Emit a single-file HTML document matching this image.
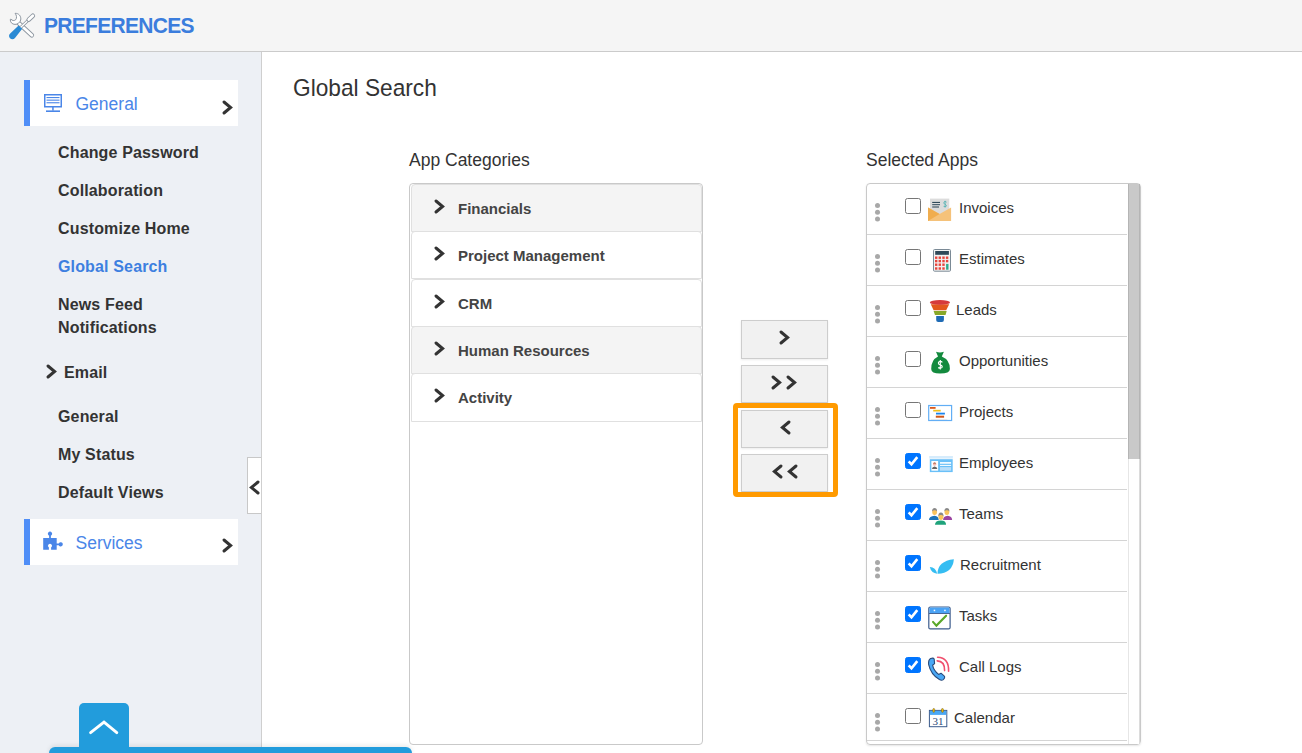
<!DOCTYPE html>
<html><head><meta charset="utf-8">
<style>
*{margin:0;padding:0;box-sizing:border-box}
html,body{width:1302px;height:753px;overflow:hidden;background:#fff;font-family:"Liberation Sans",sans-serif;color:#333}
.a{position:absolute}
svg{position:absolute;overflow:visible}
#hdr{left:0;top:0;width:1302px;height:52px;background:#f5f5f5;border-bottom:1px solid #cbcbcb}
#hdr .t{left:44px;top:13px;font-size:21px;font-weight:bold;color:#3b7ddd;line-height:24px;letter-spacing:-0.7px;transform:scaleY(1.085);transform-origin:0 4.7px}
#side{left:0;top:52px;width:262px;height:701px;background:#edf0f5;border-right:1px solid #cfcfcf}
.card{left:24px;width:214px;height:46px;background:#fff;border-left:6px solid #4f8ef7}
.card .lbl{left:45.5px;top:13px;font-size:17.5px;color:#4a86e8;line-height:22px}
.si{left:58px;font-size:16px;font-weight:bold;color:#333;line-height:20px;white-space:nowrap;letter-spacing:0.15px}
#main-h{left:293px;top:74px;font-size:22.7px;line-height:26px;color:#333;transform:scaleY(1.05);transform-origin:0 5px}
.lab{font-size:17.5px;line-height:22px;color:#333}
#cat{left:409px;top:183px;width:294px;height:562px;border:1px solid #c9c9c9;border-radius:4px;overflow:hidden}
.it{position:absolute;left:1px;width:291px;height:48px;border:1px solid #e0e0e0;border-radius:4px 4px 0 0;background:#fff}
.it.g{background:#f4f4f4}
.it .tx{position:absolute;left:46px;top:15px;font-size:15px;font-weight:bold;color:#444;line-height:18px;white-space:nowrap}
.it svg{left:22px;top:14px}
.btn{left:741px;width:87px;height:39px;background:#f1f1f1;border:1px solid #cdcdcd;box-shadow:0 1px 2px rgba(0,0,0,.08)}
#orange{left:732.5px;top:403px;width:105px;height:94px;border:5px solid #ff9a00;border-radius:4px}
#sel{left:866px;top:183px;width:275px;height:562px;border:1px solid #c9c9c9;border-radius:4px;overflow:hidden;box-shadow:0 1px 2px rgba(0,0,0,.1)}
.row{position:absolute;left:0;width:260px;height:51px;border-bottom:1px solid #d4d4d4}
.row .tx{position:absolute;font-size:15px;line-height:18px;color:#333;white-space:nowrap;top:15px;left:92px}
.dots{position:absolute;left:9px;top:19px;width:5px}
.dots i{display:block;width:5px;height:5px;border-radius:50%;background:#a9a9a9;margin-bottom:1.75px}
.cb{position:absolute;left:38px;top:14px;width:16px;height:16px;border:1px solid #767676;border-radius:2.5px;background:#fff}
.cb.on{background:#0075ff;border-color:#0075ff}
.row svg.ic{left:0;top:0}
#sb{left:1128px;top:184px;width:12px;height:560px;background:#fff;border-left:1px solid #e6e6e6;border-right:1px solid #dcdcdc}
#thumb{left:1128px;top:184px;width:12px;height:275px;background:#c9c9c9;border-left:1px solid #b5b5b5;border-right:1px solid #b5b5b5}
#tab{left:247px;top:457px;width:14px;height:57px;background:#fff;border:1px solid #c8c8c8;border-right:none}
#upbtn{left:79px;top:703px;width:50px;height:50px;background:#229cdc;border-radius:5px 5px 0 0}
#bar{left:49px;top:747px;width:363px;height:10px;background:#229cdc;border-radius:6px 6px 0 0;box-shadow:0 -2px 4px rgba(0,0,0,.08)}
</style></head><body>
<div id="hdr" class="a">
  <svg style="left:6px;top:10px" width="32" height="32" viewBox="0 0 32 32">
    <!-- wrench -->
    <g stroke-linecap="round">
      <line x1="12" y1="12.5" x2="25.8" y2="25.2" stroke="#8d96a0" stroke-width="4.6"/>
      <line x1="12" y1="12.5" x2="25.8" y2="25.2" stroke="#fff" stroke-width="2.8"/>
    </g>
    <path d="M4.3 9.3 C4 12 6 14.4 9 14.4 C11.5 14.4 14 12.6 14.7 10 C15.3 7 13.6 4 10.4 3.4 L9.1 3.3 C10.7 5.2 11 8.2 9.7 9.7 C8.2 11 6.2 10.7 5 9.2 Z" fill="#fff" stroke="#8d96a0" stroke-width="1" stroke-linejoin="round"/>
    <!-- screwdriver -->
    <g stroke-linecap="round">
      <line x1="14" y1="18" x2="24" y2="8.6" stroke="#8d96a0" stroke-width="3"/>
      <line x1="14" y1="18" x2="24" y2="8.6" stroke="#fff" stroke-width="1.4"/>
      <line x1="22.8" y1="9.6" x2="26.8" y2="5.8" stroke="#8d96a0" stroke-width="4.6"/>
      <line x1="22.8" y1="9.6" x2="26.8" y2="5.8" stroke="#fff" stroke-width="2.8"/>
    </g>
    <path d="M12.6 15.6 L16.2 18.8 L9 28 C7.6 29.6 5.4 29.6 4 28.2 C2.6 26.8 2.8 24.8 4.2 23.6 Z" fill="#2a8ad4"/>
  </svg>
  <div class="a t">PREFERENCES</div>
</div>
<div id="side" class="a"></div>
<div class="a card" style="top:80px">
  <svg style="left:14px;top:14px" width="18" height="18" viewBox="0 0 18 18">
    <rect x="0.75" y="0.75" width="16.5" height="12" fill="none" stroke="#4a86e8" stroke-width="1.5"/>
    <rect x="2.5" y="3" width="13" height="1.1" fill="#4a86e8"/>
    <rect x="2.5" y="5.6" width="13" height="1.1" fill="#4a86e8"/>
    <rect x="2.5" y="8.2" width="13" height="1.1" fill="#4a86e8"/>
    <rect x="8.2" y="12.6" width="1.5" height="4" fill="#4a86e8"/>
    <rect x="2" y="16.4" width="14" height="1.6" fill="#4a86e8"/>
  </svg>
  <div class="a lbl">General</div>
  <svg style="left:192px;top:20px" width="11" height="15"><path d="M2 2 L8.6 7.5 L2 13" fill="none" stroke="#333" stroke-width="3" stroke-linecap="round" stroke-linejoin="miter"/></svg>
</div>
<div class="a si" style="top:143px">Change Password</div>
<div class="a si" style="top:181px">Collaboration</div>
<div class="a si" style="top:219px">Customize Home</div>
<div class="a si" style="top:257px;color:#3d7fe0">Global Search</div>
<div class="a si" style="top:293px;line-height:23px">News Feed<br>Notifications</div>
<svg style="left:46px;top:364px" width="11" height="15"><path d="M2 2 L8.6 7.5 L2 13" fill="none" stroke="#333" stroke-width="3" stroke-linecap="round" stroke-linejoin="miter"/></svg>
<div class="a si" style="top:363px;left:64px">Email</div>
<div class="a si" style="top:407px">General</div>
<div class="a si" style="top:445px">My Status</div>
<div class="a si" style="top:483px">Default Views</div>
<div class="a card" style="top:519px">
  <svg style="left:8px;top:7px" width="24" height="24" viewBox="0 0 24 24">
    <path d="M5.2 12 H11.1 V9.7 A2.15 2.15 0 1 1 12.9 9.7 V12 H18.7 V17.4 H20.7 A2.15 2.15 0 1 1 20.7 19.2 H18.7 V23.7 H13.1 V21.5 A2 2 0 1 0 10.9 21.5 V23.7 H5.2 Z" fill="#4a86e8"/>
  </svg>
  <div class="a lbl">Services</div>
  <svg style="left:192px;top:39px;top:19px" width="11" height="15"><path d="M2 2 L8.6 7.5 L2 13" fill="none" stroke="#333" stroke-width="3" stroke-linecap="round" stroke-linejoin="miter"/></svg>
</div>
<div id="tab" class="a"><svg style="left:1px;top:22px" width="11" height="15"><path d="M9 2 L2.4 7.5 L9 13" fill="none" stroke="#333" stroke-width="3" stroke-linecap="round" stroke-linejoin="miter"/></svg></div>

<div id="main-h" class="a">Global Search</div>
<div class="a lab" style="left:409px;top:149px">App Categories</div>
<div class="a lab" style="left:866px;top:149px">Selected Apps</div>

<div id="cat" class="a">
  <div class="it g" style="top:0px"><svg width="11" height="15"><path d="M2 2 L8.6 7.5 L2 13" fill="none" stroke="#333" stroke-width="3" stroke-linecap="round" stroke-linejoin="miter"/></svg><div class="tx">Financials</div></div>
  <div class="it" style="top:47px"><svg width="11" height="15"><path d="M2 2 L8.6 7.5 L2 13" fill="none" stroke="#333" stroke-width="3" stroke-linecap="round" stroke-linejoin="miter"/></svg><div class="tx">Project Management</div></div>
  <div class="it" style="top:95px"><svg width="11" height="15"><path d="M2 2 L8.6 7.5 L2 13" fill="none" stroke="#333" stroke-width="3" stroke-linecap="round" stroke-linejoin="miter"/></svg><div class="tx">CRM</div></div>
  <div class="it g" style="top:142px"><svg width="11" height="15"><path d="M2 2 L8.6 7.5 L2 13" fill="none" stroke="#333" stroke-width="3" stroke-linecap="round" stroke-linejoin="miter"/></svg><div class="tx">Human Resources</div></div>
  <div class="it" style="top:189px;height:49px"><svg width="11" height="15"><path d="M2 2 L8.6 7.5 L2 13" fill="none" stroke="#333" stroke-width="3" stroke-linecap="round" stroke-linejoin="miter"/></svg><div class="tx">Activity</div></div>
</div>

<div class="a btn" style="top:320px"><svg style="left:37px;top:9px" width="11" height="15"><path d="M2 2 L8.6 7.5 L2 13" fill="none" stroke="#333" stroke-width="3" stroke-linecap="round" stroke-linejoin="miter"/></svg></div>
<div class="a btn" style="top:365px;height:38px"><svg style="left:29px;top:9px" width="11" height="15"><path d="M2 2 L8.6 7.5 L2 13" fill="none" stroke="#333" stroke-width="3" stroke-linecap="round" stroke-linejoin="miter"/></svg><svg style="left:44px;top:9px" width="11" height="15"><path d="M2 2 L8.6 7.5 L2 13" fill="none" stroke="#333" stroke-width="3" stroke-linecap="round" stroke-linejoin="miter"/></svg></div>
<div class="a btn" style="top:410px;height:38px"><svg style="left:38px;top:8.5px" width="11" height="15"><path d="M9 2 L2.4 7.5 L9 13" fill="none" stroke="#333" stroke-width="3" stroke-linecap="round" stroke-linejoin="miter"/></svg></div>
<div class="a btn" style="top:454px;height:38px"><svg style="left:30px;top:9px" width="11" height="15"><path d="M9 2 L2.4 7.5 L9 13" fill="none" stroke="#333" stroke-width="3" stroke-linecap="round" stroke-linejoin="miter"/></svg><svg style="left:45px;top:9px" width="11" height="15"><path d="M9 2 L2.4 7.5 L9 13" fill="none" stroke="#333" stroke-width="3" stroke-linecap="round" stroke-linejoin="miter"/></svg></div>
<div id="orange" class="a"></div>

<div id="sel" class="a">
 <div class="row" style="top:0">
  <svg style="left:8px;top:19px" width="5" height="19"><circle cx="2.5" cy="2.5" r="2.5" fill="#a8a8a8"/><circle cx="2.5" cy="9.3" r="2.5" fill="#a8a8a8"/><circle cx="2.5" cy="16" r="2.5" fill="#a8a8a8"/></svg><div class="cb"></div>
  <svg class="ic" width="30" height="30" viewBox="0 0 30 30" style="left:58px;top:11px">
    <rect x="5" y="3.6" width="19.3" height="16" fill="#dcdcdc"/>
    <rect x="7.2" y="6.9" width="7.8" height="1.1" fill="#2f4a5a"/>
    <rect x="7.2" y="9.1" width="7.8" height="1.1" fill="#3d5666"/>
    <rect x="7.2" y="11.2" width="6.8" height="1.6" fill="#6a7a86"/>
    <path d="M21.6 7.2 Q20.6 6.2 19.6 6.6 Q18.4 7.1 19 8.4 Q19.6 9.2 20.6 9.6 Q21.8 10.3 21.2 11.3 Q20.4 12.2 18.6 11.4 M20.1 5.8 V12.4" fill="none" stroke="#49aeb0" stroke-width="0.8"/>
    <path d="M3 12.4 L14.6 19 L26.1 12.4 V25.9 H3 Z" fill="#f5c27a"/>
    <path d="M3 12.4 L14.6 19 L3 25.9 Z" fill="#f0ad4e"/>
  </svg>
  <div class="tx">Invoices</div>
 </div>
 <div class="row" style="top:51px">
  <svg style="left:8px;top:19px" width="5" height="19"><circle cx="2.5" cy="2.5" r="2.5" fill="#a8a8a8"/><circle cx="2.5" cy="9.3" r="2.5" fill="#a8a8a8"/><circle cx="2.5" cy="16" r="2.5" fill="#a8a8a8"/></svg><div class="cb"></div>
  <svg class="ic" width="30" height="30" viewBox="0 0 30 30" style="left:61px;top:10px">
    <rect x="5.5" y="4.5" width="17" height="21.7" rx="1" fill="#f2f2f2" stroke="#7b8a96" stroke-width="1"/>
    <rect x="7.2" y="6" width="13.7" height="3.8" fill="#2f4858"/>
    <g fill="#e8453c">
      <rect x="7" y="11.5" width="2.4" height="2.4"/><rect x="10.6" y="11.5" width="2.4" height="2.4"/><rect x="14.3" y="11.5" width="2.4" height="2.4"/><rect x="17.9" y="11.5" width="2.4" height="2.4"/>
      <rect x="7" y="14.9" width="2.4" height="2.4"/><rect x="10.6" y="14.9" width="2.4" height="2.4"/><rect x="14.3" y="14.9" width="2.4" height="2.4"/><rect x="17.9" y="14.9" width="2.4" height="2.4"/>
      <rect x="7" y="18.5" width="2.4" height="2.4"/><rect x="10.6" y="18.5" width="2.4" height="2.4"/><rect x="14.3" y="18.5" width="2.4" height="2.4"/>
      <rect x="7" y="22.3" width="2.4" height="2.4"/><rect x="10.6" y="22.3" width="2.4" height="2.4"/><rect x="14.3" y="22.3" width="2.4" height="2.4"/>
    </g>
    <rect x="18.1" y="18.9" width="2.4" height="5.8" fill="#2eaa8a"/>
  </svg>
  <div class="tx">Estimates</div>
 </div>
 <div class="row" style="top:102px">
  <svg style="left:8px;top:19px" width="5" height="19"><circle cx="2.5" cy="2.5" r="2.5" fill="#a8a8a8"/><circle cx="2.5" cy="9.3" r="2.5" fill="#a8a8a8"/><circle cx="2.5" cy="16" r="2.5" fill="#a8a8a8"/></svg><div class="cb"></div>
  <svg class="ic" width="30" height="30" viewBox="0 0 30 30" style="left:59px;top:10px">
    <path d="M4.8 8.2 L7.6 14.3 H20.2 L23.2 8.2 Z" fill="#e2571b"/>
    <ellipse cx="13.9" cy="6.4" rx="10.1" ry="2.4" fill="#d63a3a"/>
    <path d="M7.6 14.9 L9 18.9 H19.5 L20.7 14.9 Z" fill="#88a829"/>
    <path d="M10.2 19.9 H17.9 V24 Q17.9 25.9 16 25.9 H12.1 Q10.2 25.9 10.2 24 Z" fill="#1f6bb5"/>
  </svg>
  <div class="tx" style="left:89px">Leads</div>
 </div>
 <div class="row" style="top:153px">
  <svg style="left:8px;top:19px" width="5" height="19"><circle cx="2.5" cy="2.5" r="2.5" fill="#a8a8a8"/><circle cx="2.5" cy="9.3" r="2.5" fill="#a8a8a8"/><circle cx="2.5" cy="16" r="2.5" fill="#a8a8a8"/></svg><div class="cb"></div>
  <svg class="ic" width="30" height="30" viewBox="0 0 30 30" style="left:59px;top:10px">
    <path d="M10 4.8 Q14 6.2 17.9 4.8 L15.8 9.6 Q23.9 13 23.9 22 Q23.9 26.5 14 26.5 Q5.2 26.5 5.2 22 Q5.2 13 12 9.6 Z" fill="#138a3e"/>
    <path d="M16.4 15.3 Q15.2 14.1 13.6 14.5 Q11.9 15.1 12.6 16.8 Q13.2 17.6 14.6 18 Q16.6 18.7 16.1 20.3 Q15.2 21.7 12.2 20.6 M14.3 12.9 V22.6" fill="none" stroke="#fff" stroke-width="1.15"/>
  </svg>
  <div class="tx">Opportunities</div>
 </div>
 <div class="row" style="top:204px">
  <svg style="left:8px;top:19px" width="5" height="19"><circle cx="2.5" cy="2.5" r="2.5" fill="#a8a8a8"/><circle cx="2.5" cy="9.3" r="2.5" fill="#a8a8a8"/><circle cx="2.5" cy="16" r="2.5" fill="#a8a8a8"/></svg><div class="cb"></div>
  <svg class="ic" width="30" height="30" viewBox="0 0 30 30" style="left:58px;top:10px">
    <rect x="3.7" y="7.5" width="22.9" height="15" fill="#fff" stroke="#62aef5" stroke-width="1.2"/>
    <rect x="5" y="9" width="5.6" height="1.8" fill="#d9581a"/>
    <rect x="8.2" y="11.8" width="7.5" height="1.7" fill="#f2c01e"/>
    <rect x="11" y="14.7" width="8.9" height="1.8" fill="#1a86f0"/>
    <rect x="10.8" y="17.7" width="8.3" height="2" fill="#d0581a"/>
    <rect x="6" y="21.2" width="16.3" height="0.6" fill="#ddd"/>
  </svg>
  <div class="tx">Projects</div>
 </div>
 <div class="row" style="top:255px">
  <svg style="left:8px;top:19px" width="5" height="19"><circle cx="2.5" cy="2.5" r="2.5" fill="#a8a8a8"/><circle cx="2.5" cy="9.3" r="2.5" fill="#a8a8a8"/><circle cx="2.5" cy="16" r="2.5" fill="#a8a8a8"/></svg><div class="cb on"><svg width="16" height="16" style="left:-1px;top:-1px"><path d="M3.7 8.3 L6.5 11.3 L12.3 4.1" fill="none" stroke="#fff" stroke-width="2.6"/></svg></div>
  <svg class="ic" width="30" height="30" viewBox="0 0 30 30" style="left:58px;top:10px">
    <rect x="4.2" y="7" width="23.7" height="2.6" fill="#d6ecfc"/>
    <rect x="4.8" y="10.2" width="22.9" height="12.9" fill="#6ac0f8"/>
    <rect x="6.4" y="12" width="6.7" height="9.7" fill="#fff"/>
    <circle cx="9.6" cy="15.2" r="1.6" fill="#f4b8b0"/>
    <path d="M7.8 14.6 Q9.6 12.6 11.4 14.6 Z" fill="#9a4a2a"/>
    <path d="M6.9 20 Q7.2 17.6 9.6 17.4 Q12 17.6 12.4 20 Z" fill="#666"/>
    <rect x="15" y="13.1" width="11.1" height="1.6" fill="#fff"/>
    <rect x="15" y="15.9" width="11.1" height="1" fill="#fff"/>
    <rect x="15" y="18.1" width="11.1" height="3.6" fill="#b8defa"/>
  </svg>
  <div class="tx">Employees</div>
 </div>
 <div class="row" style="top:306px">
  <svg style="left:8px;top:19px" width="5" height="19"><circle cx="2.5" cy="2.5" r="2.5" fill="#a8a8a8"/><circle cx="2.5" cy="9.3" r="2.5" fill="#a8a8a8"/><circle cx="2.5" cy="16" r="2.5" fill="#a8a8a8"/></svg><div class="cb on"><svg width="16" height="16" style="left:-1px;top:-1px"><path d="M3.7 8.3 L6.5 11.3 L12.3 4.1" fill="none" stroke="#fff" stroke-width="2.6"/></svg></div>
  <svg class="ic" width="30" height="30" viewBox="0 0 30 30" style="left:58px;top:10px">
    <path d="M4 19.9 Q4 16 9.6 15.7 Q13.7 16 13.7 19.9 Z" fill="#1a72b8"/>
    <ellipse cx="9.6" cy="12" rx="2.4" ry="3" fill="#f9c35b"/>
    <path d="M7.1 11.6 Q7 8 9.6 8 Q12.2 8 12.1 11.6 Q11 10 9.6 10.2 Q8.2 10 7.1 11.6Z" fill="#888"/>
    <path d="M18.1 19.9 Q18.1 16 22.6 15.7 Q27.1 16 27.1 19.9 Z" fill="#9b44a0"/>
    <ellipse cx="21.9" cy="12" rx="2.4" ry="3" fill="#f9c35b"/>
    <path d="M19.4 11.6 Q19.3 8 21.9 8 Q24.5 8 24.4 11.6 Q23.3 10 21.9 10.2 Q20.5 10 19.4 11.6Z" fill="#888"/>
    <path d="M10 24.7 Q10 20.6 15.9 20.5 Q21.1 20.6 21.1 24.7 Z" fill="#1fa37b"/>
    <ellipse cx="15.9" cy="16.8" rx="2.5" ry="3.1" fill="#f9c35b"/>
    <path d="M13.3 16.4 Q13.2 12.6 15.9 12.6 Q18.6 12.6 18.5 16.4 Q17.3 14.8 15.9 15 Q14.5 14.8 13.3 16.4Z" fill="#888"/>
  </svg>
  <div class="tx">Teams</div>
 </div>
 <div class="row" style="top:357px">
  <svg style="left:8px;top:19px" width="5" height="19"><circle cx="2.5" cy="2.5" r="2.5" fill="#a8a8a8"/><circle cx="2.5" cy="9.3" r="2.5" fill="#a8a8a8"/><circle cx="2.5" cy="16" r="2.5" fill="#a8a8a8"/></svg><div class="cb on"><svg width="16" height="16" style="left:-1px;top:-1px"><path d="M3.7 8.3 L6.5 11.3 L12.3 4.1" fill="none" stroke="#fff" stroke-width="2.6"/></svg></div>
  <svg class="ic" width="30" height="30" viewBox="0 0 30 30" style="left:58px;top:10px">
    <path d="M4.8 15.9 Q10.5 15.8 12.2 22.7 Q6.2 22 4.8 15.9 Z" fill="#35bdf2"/>
    <path d="M12.5 22.7 Q12.6 10 28.9 8.2 Q27.6 22.4 12.5 22.7 Z" fill="#35bdf2"/>
  </svg>
  <div class="tx" style="left:93px">Recruitment</div>
 </div>
 <div class="row" style="top:408px">
  <svg style="left:8px;top:19px" width="5" height="19"><circle cx="2.5" cy="2.5" r="2.5" fill="#a8a8a8"/><circle cx="2.5" cy="9.3" r="2.5" fill="#a8a8a8"/><circle cx="2.5" cy="16" r="2.5" fill="#a8a8a8"/></svg><div class="cb on"><svg width="16" height="16" style="left:-1px;top:-1px"><path d="M3.7 8.3 L6.5 11.3 L12.3 4.1" fill="none" stroke="#fff" stroke-width="2.6"/></svg></div>
  <svg class="ic" width="30" height="30" viewBox="0 0 30 30" style="left:57px;top:10px">
    <rect x="4.8" y="5" width="21.3" height="21.9" rx="1.5" fill="#fff" stroke="#3a5a8c" stroke-width="1.2"/>
    <path d="M5.4 11.4 V6.5 Q5.4 5.6 6.4 5.6 H24.6 Q25.5 5.6 25.5 6.5 V11.4 Z" fill="#4aa3f5"/>
    <rect x="5" y="11.1" width="21" height="0.9" fill="#3a5a8c"/>
    <rect x="9.7" y="7.7" width="1.5" height="1.5" fill="#fff"/>
    <rect x="20.2" y="7.7" width="1.5" height="1.5" fill="#fff"/>
    <path d="M9 19.9 L12.4 23.6 L22.1 13.7" fill="none" stroke="#5aa82a" stroke-width="2.1" stroke-linecap="round"/>
  </svg>
  <div class="tx">Tasks</div>
 </div>
 <div class="row" style="top:459px">
  <svg style="left:8px;top:19px" width="5" height="19"><circle cx="2.5" cy="2.5" r="2.5" fill="#a8a8a8"/><circle cx="2.5" cy="9.3" r="2.5" fill="#a8a8a8"/><circle cx="2.5" cy="16" r="2.5" fill="#a8a8a8"/></svg><div class="cb on"><svg width="16" height="16" style="left:-1px;top:-1px"><path d="M3.7 8.3 L6.5 11.3 L12.3 4.1" fill="none" stroke="#fff" stroke-width="2.6"/></svg></div>
  <svg class="ic" width="30" height="32" viewBox="0 0 30 32" style="left:57px;top:9px">
    <path d="M6.6 6.6 Q9.6 5.4 10.2 7.2 L10.6 11.6 L8.6 13.2 Q9.6 18.6 14.6 22.4 L17 21.2 L20.6 24.4 Q21.2 26.2 19.4 27.6 Q17.6 28.8 15.4 27.6 Q6.8 22.6 4.6 12.4 Q4.2 8 6.6 6.6 Z" fill="#4aa8f5" stroke="#2a4a7a" stroke-width="1.1" stroke-linejoin="round"/>
    <path d="M13.2 8.9 Q20.8 9.2 20.6 18.6" fill="none" stroke="#f0506e" stroke-width="1.6" stroke-linecap="round"/>
    <path d="M13.6 5.3 Q25 5.6 24.6 19.2" fill="none" stroke="#f0506e" stroke-width="1.6" stroke-linecap="round"/>
  </svg>
  <div class="tx">Call Logs</div>
 </div>
 <div class="row" style="top:510px;height:47px">
  <svg style="left:8px;top:19px" width="5" height="19"><circle cx="2.5" cy="2.5" r="2.5" fill="#a8a8a8"/><circle cx="2.5" cy="9.3" r="2.5" fill="#a8a8a8"/><circle cx="2.5" cy="16" r="2.5" fill="#a8a8a8"/></svg><div class="cb"></div>
  <svg class="ic" width="30" height="30" viewBox="0 0 30 30" style="left:57px;top:9px">
    <rect x="5.4" y="7.4" width="17.4" height="16.3" fill="#fff" stroke="#3a5a8c" stroke-width="1"/>
    <rect x="5.9" y="7.9" width="16.4" height="4" fill="#4aa8f5"/>
    <rect x="8.8" y="5.5" width="1.9" height="3.8" rx="0.9" fill="#f5c000" stroke="#6a5a2a" stroke-width="0.5"/>
    <rect x="17.5" y="5.5" width="1.9" height="3.8" rx="0.9" fill="#f5c000" stroke="#6a5a2a" stroke-width="0.5"/>
    <text x="14.1" y="21.7" text-anchor="middle" font-family="Liberation Serif" font-size="11" fill="#2a4a7a">31</text>
  </svg>
  <div class="tx" style="left:87px">Calendar</div>
 </div>
</div>
<div id="sb" class="a"></div>
<div id="thumb" class="a"></div>

<div id="bar" class="a"></div>
<div id="upbtn" class="a"><svg style="left:0;top:0" width="50" height="50"><path d="M11.6 29.6 L25 19.2 L37.8 29.6" fill="none" stroke="#fff" stroke-width="2.9" stroke-linecap="round"/></svg></div>
</body></html>
